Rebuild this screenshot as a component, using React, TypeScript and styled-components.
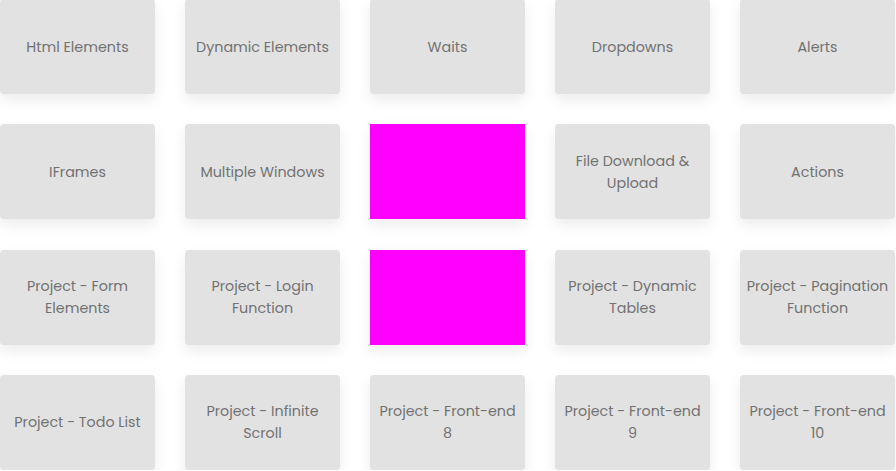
import React from "react";
import styled, { createGlobalStyle } from "styled-components";

const Global = createGlobalStyle`
  html, body { margin: 0; padding: 0; background: #ffffff; }
  body { font-family: Poppins, "Open Sans", Lato, sans-serif; }
`;

const Grid = styled.div`
  display: grid;
  grid-template-columns: repeat(5, 155px);
  grid-auto-rows: 95px;
  column-gap: 30px;
  row-gap: 30.33px;
  margin-top: -1px;
  width: 896px;
`;

const Card = styled.div<{ $image?: boolean }>`
  display: flex;
  align-items: center;
  justify-content: center;
  text-align: center;
  padding: 0 5px;
  box-sizing: border-box;
  background: ${(p) => (p.$image ? "#ff00ff" : "#e2e2e2")};
  border-radius: ${(p) => (p.$image ? "0" : "4px")};
  box-shadow: 0 6px 14px rgba(0, 0, 0, 0.08);
  color: #727272;
  font-size: 14.3px;
  line-height: 22px;
  font-weight: 400;
`;

const items: (string | null)[] = [
  "Html Elements",
  "Dynamic Elements",
  "Waits",
  "Dropdowns",
  "Alerts",
  "IFrames",
  "Multiple Windows",
  null,
  "File Download & Upload",
  "Actions",
  "Project - Form Elements",
  "Project - Login Function",
  null,
  "Project - Dynamic Tables",
  "Project - Pagination Function",
  "Project - Todo List",
  "Project - Infinite Scroll",
  "Project - Front-end 8",
  "Project - Front-end 9",
  "Project - Front-end 10",
];

export default function App() {
  return (
    <>
      <Global />
      <Grid>
        {items.map((t, i) =>
          t === null ? <Card key={i} $image /> : <Card key={i}>{t}</Card>
        )}
      </Grid>
    </>
  );
}
